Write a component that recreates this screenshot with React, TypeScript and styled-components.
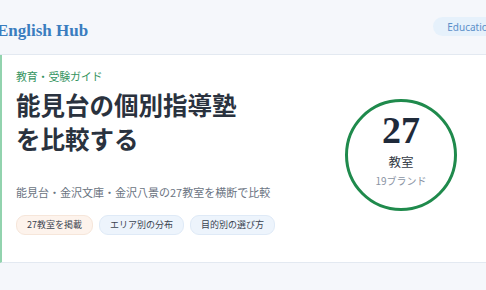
import styled, { createGlobalStyle } from "styled-components";

const GlobalStyle = createGlobalStyle`
  html, body {
    margin: 0;
    padding: 0;
    background: #f5f7fb;
    overflow: hidden;
  }
  body {
    font-family: "Noto Sans CJK JP", "Noto Sans", sans-serif;
  }
`;

function App() {
  return (
    <Page>
      <GlobalStyle />
      <Header>
        <Logo>English Hub</Logo>
        <Badge>Education</Badge>
      </Header>
      <Hero>
        <Intro>
          <Kicker>教育・受験ガイド</Kicker>
          <Title>
            能見台の個別指導塾
            <br />
            を比較する
          </Title>
          <Lead>能見台・金沢文庫・金沢八景の27教室を横断で比較</Lead>
          <Tags>
            <Tag $tone="warm">27教室を掲載</Tag>
            <Tag $tone="cool">エリア別の分布</Tag>
            <Tag $tone="cool">目的別の選び方</Tag>
          </Tags>
        </Intro>
        <Stat>
          <StatNumber>27</StatNumber>
          <StatUnit>教室</StatUnit>
          <StatSub>19ブランド</StatSub>
        </Stat>
      </Hero>
    </Page>
  );
}

export default App;

const Page = styled.div`
  width: 486px;
  height: 290px;
  background: #f5f7fb;
`;

const Header = styled.header`
  height: 54px;
  display: flex;
  align-items: flex-start;
  justify-content: space-between;
  border-bottom: 1px solid #e3e9f1;
  overflow: hidden;
`;

const Logo = styled.div`
  margin-left: -3px;
  padding-top: 21px;
  font-family: "Liberation Serif", "DejaVu Serif", serif;
  font-size: 17px;
  line-height: 20px;
  font-weight: 700;
  color: #3a7dbf;
  white-space: nowrap;
`;

const Badge = styled.span`
  flex-shrink: 0;
  margin-right: -22px;
  margin-top: 17px;
  height: 19px;
  padding: 0 14px;
  display: flex;
  align-items: center;
  border-radius: 10px;
  background: #e6f1fb;
  color: #5b8fc9;
  font-family: "Noto Sans", sans-serif;
  font-size: 10px;
  white-space: nowrap;
`;

const Hero = styled.section`
  display: flex;
  align-items: center;
  justify-content: space-between;
  height: 208px;
  box-sizing: border-box;
  padding: 14px 29px 29px 14px;
  background: #ffffff;
  border-left: 2px solid #92d3ae;
  border-bottom: 1px solid #e3e9f1;
`;

const Intro = styled.div`
  display: flex;
  flex-direction: column;
`;

const Kicker = styled.div`
  font-size: 11px;
  line-height: 16px;
  color: #35945f;
  letter-spacing: -0.2px;
`;

const Title = styled.h1`
  margin: 4px 0 0;
  font-size: 24.5px;
  line-height: 34px;
  font-weight: 700;
  color: #2a323e;
`;

const Lead = styled.p`
  margin: 27px 0 0;
  font-size: 11px;
  line-height: 18px;
  color: #6b7482;
`;

const Tags = styled.div`
  display: flex;
  gap: 6px;
  margin-top: 14px;
`;

const Tag = styled.span<{ $tone: "warm" | "cool" }>`
  height: 18px;
  padding: 0 10px;
  display: flex;
  align-items: center;
  border-radius: 9px;
  font-size: 9px;
  color: #3a4350;
  background: ${(p) => (p.$tone === "warm" ? "#fdf3ec" : "#edf4fc")};
  border: 1px solid ${(p) => (p.$tone === "warm" ? "#f6e6da" : "#dfeaf7")};
`;

const Stat = styled.div`
  width: 112px;
  height: 112px;
  box-sizing: border-box;
  padding-bottom: 12px;
  border: 3px solid #1f8a4c;
  border-radius: 50%;
  display: flex;
  flex-direction: column;
  align-items: center;
  justify-content: center;
  margin-top: 8px;
`;

const StatNumber = styled.div`
  font-family: "Liberation Serif", "DejaVu Serif", serif;
  font-size: 38px;
  line-height: 40px;
  font-weight: 700;
  color: #1f2a3a;
`;

const StatUnit = styled.div`
  margin-top: 3px;
  font-size: 12.5px;
  line-height: 18px;
  color: #333a44;
`;

const StatSub = styled.div`
  margin-top: 3px;
  font-size: 10px;
  line-height: 14px;
  color: #8a94a3;
`;
